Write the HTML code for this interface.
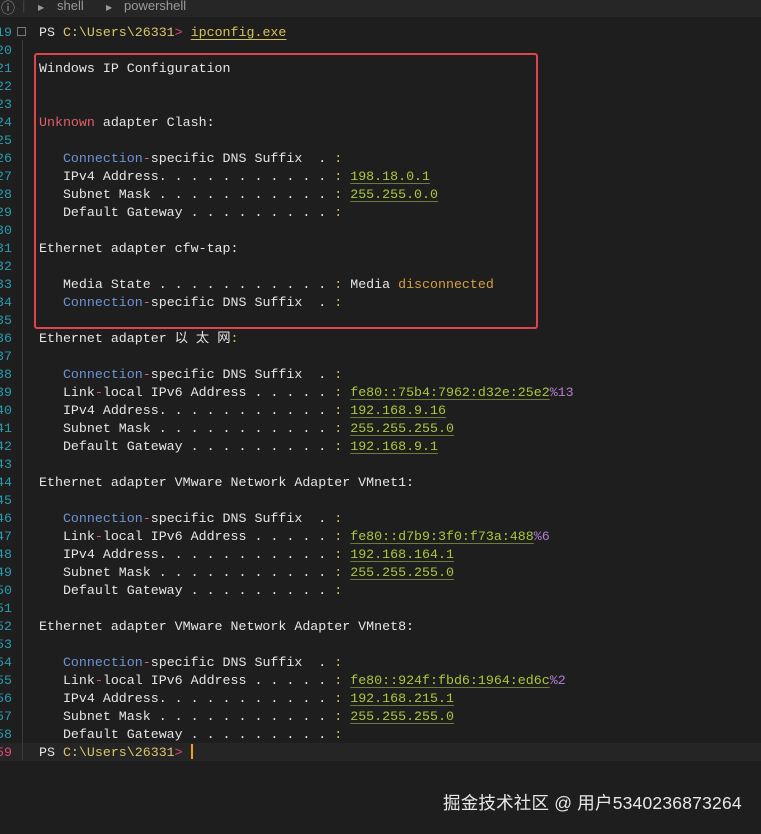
<!DOCTYPE html>
<html><head><meta charset="utf-8"><style>
body{margin:0;width:761px;height:834px;background:#1e1e1e;overflow:hidden;position:relative;font-family:"Liberation Mono","Noto Sans CJK SC",monospace;font-size:13.3px;color:#e6e6e6}
.top{position:absolute;left:0;top:0;width:761px;height:17px;background:#262626;color:#9a9a9a;font-family:"Liberation Sans",sans-serif;font-size:13px}
.top span{position:absolute;top:-2px}
.ln{position:absolute;left:-10px;width:22px;text-align:right;color:#2b9bb0;height:18px;line-height:18px}
.row{position:absolute;left:39px;height:18px;line-height:18px;white-space:pre}
.gut{position:absolute;left:22px;top:40px;width:1px;height:720px;background:#3a3a3a}
.b{color:#6f93d6}.r{color:#e35d6a}.y{color:#d6c25a}.g{color:#a9c83e;text-decoration:underline;text-decoration-color:#6d7a3a;text-underline-offset:3px}
.o{color:#d5a040}.p{color:#b07fd0}.pk{color:#e0487a}.path{color:#d7c76a}
.box{position:absolute;left:34px;top:53px;width:500px;height:272px;border:2px solid #e0434b;border-radius:3px}
.wm{position:absolute;left:443px;top:790px;font-family:"Liberation Sans","Noto Sans CJK SC",sans-serif;font-size:17.5px;color:#e8e8e8;letter-spacing:0.2px}
</style></head><body>
<div class="top"><span style="left:1px;font-size:14px">ⓘ</span><span style="left:22px;color:#444">|</span><span style="left:38px;font-size:8px;top:3px">▶</span><span style="left:57px">shell</span><span style="left:106px;font-size:8px;top:3px">▶</span><span style="left:124px">powershell</span></div>
<div style="position:absolute;left:0;top:743px;width:761px;height:18px;background:#252525"></div>
<div class="gut"></div>
<div style="position:absolute;left:17px;top:27px;width:9px;height:9px;border:1px solid #777;box-sizing:border-box"></div>
<div class="box"></div>
<div id="c"></div>
<script>
var L={
19:'PS <span class="path">C:\\Users\\26331</span><span class="pk">&gt;</span> <span class="y" style="text-decoration:underline;text-underline-offset:3px">ipconfig.exe</span>',
21:'Windows IP Configuration',
24:'<span class="r">Unknown</span> adapter Clash:',
26:'   <span class="b">Connection</span><span class="r">-</span>specific DNS Suffix  . <span class="y">:</span>',
27:'   IPv4 Address. . . . . . . . . . . <span class="y">:</span> <span class="g">198.18.0.1</span>',
28:'   Subnet Mask . . . . . . . . . . . <span class="y">:</span> <span class="g">255.255.0.0</span>',
29:'   Default Gateway . . . . . . . . . <span class="y">:</span>',
31:'Ethernet adapter cfw-tap:',
33:'   Media State . . . . . . . . . . . <span class="y">:</span> Media <span class="o">disconnected</span>',
34:'   <span class="b">Connection</span><span class="r">-</span>specific DNS Suffix  . <span class="y">:</span>',
36:'Ethernet adapter 以 太 网<span class="y">:</span>',
38:'   <span class="b">Connection</span><span class="r">-</span>specific DNS Suffix  . <span class="y">:</span>',
39:'   Link<span class="r">-</span>local IPv6 Address . . . . . <span class="y">:</span> <span class="g">fe80::75b4:7962:d32e:25e2</span><span class="p">%13</span>',
40:'   IPv4 Address. . . . . . . . . . . <span class="y">:</span> <span class="g">192.168.9.16</span>',
41:'   Subnet Mask . . . . . . . . . . . <span class="y">:</span> <span class="g">255.255.255.0</span>',
42:'   Default Gateway . . . . . . . . . <span class="y">:</span> <span class="g">192.168.9.1</span>',
44:'Ethernet adapter VMware Network Adapter VMnet1:',
46:'   <span class="b">Connection</span><span class="r">-</span>specific DNS Suffix  . <span class="y">:</span>',
47:'   Link<span class="r">-</span>local IPv6 Address . . . . . <span class="y">:</span> <span class="g">fe80::d7b9:3f0:f73a:488</span><span class="p">%6</span>',
48:'   IPv4 Address. . . . . . . . . . . <span class="y">:</span> <span class="g">192.168.164.1</span>',
49:'   Subnet Mask . . . . . . . . . . . <span class="y">:</span> <span class="g">255.255.255.0</span>',
50:'   Default Gateway . . . . . . . . . <span class="y">:</span>',
52:'Ethernet adapter VMware Network Adapter VMnet8:',
54:'   <span class="b">Connection</span><span class="r">-</span>specific DNS Suffix  . <span class="y">:</span>',
55:'   Link<span class="r">-</span>local IPv6 Address . . . . . <span class="y">:</span> <span class="g">fe80::924f:fbd6:1964:ed6c</span><span class="p">%2</span>',
56:'   IPv4 Address. . . . . . . . . . . <span class="y">:</span> <span class="g">192.168.215.1</span>',
57:'   Subnet Mask . . . . . . . . . . . <span class="y">:</span> <span class="g">255.255.255.0</span>',
58:'   Default Gateway . . . . . . . . . <span class="y">:</span>',
59:'PS <span class="path">C:\\Users\\26331</span><span class="pk">&gt;</span> <span style="display:inline-block;width:2px;height:15px;background:#f0a020;vertical-align:-3px"></span>'
};
var h='';
for(var n=19;n<=59;n++){var t=24+(n-19)*18;
h+='<div class="ln" style="top:'+t+'px;'+(n==59?'color:#e0487a':'')+'">'+n+'</div>';
if(L[n])h+='<div class="row" style="top:'+t+'px">'+L[n]+'</div>';}
document.getElementById('c').innerHTML=h;
</script>
<div class="wm">掘金技术社区 @ 用户5340236873264</div>
</body></html>
